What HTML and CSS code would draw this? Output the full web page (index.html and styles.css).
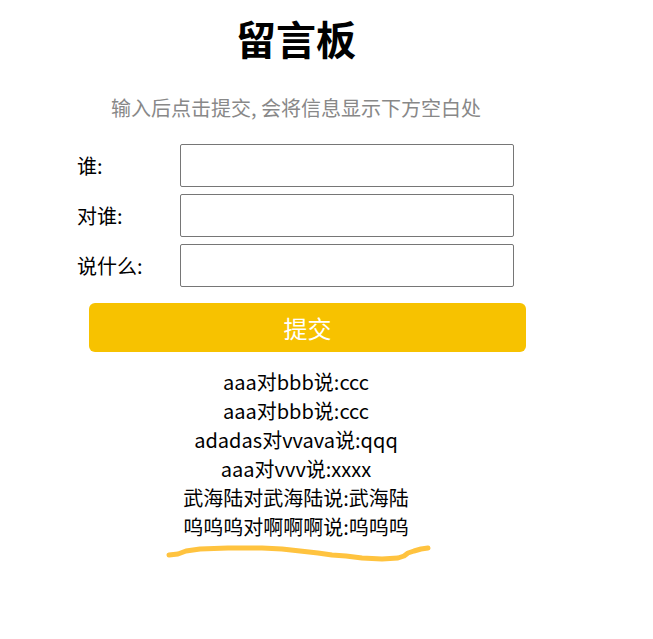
FILE: index.html
```html
<!DOCTYPE html>
<html lang="zh-CN">
<head>
    <meta charset="UTF-8">
    <meta name="viewport" content="width=device-width, initial-scale=1.0">
    <title>留言板</title>
    <link rel="stylesheet" href="styles.css">
</head>
<body>
    <div class="board">
        <h1>留言板</h1>
        <p class="hint">输入后点击提交, 会将信息显示下方空白处</p>

        <div class="form">
            <label for="from">谁:</label>
            <input type="text" id="from">
            <label for="to">对谁:</label>
            <input type="text" id="to">
            <label for="msg">说什么:</label>
            <input type="text" id="msg">
        </div>

        <button class="submit">提交</button>

        <div class="messages">
            <div>aaa对bbb说:ccc</div>
            <div>aaa对bbb说:ccc</div>
            <div>adadas对vvava说:qqq</div>
            <div>aaa对vvv说:xxxx</div>
            <div>武海陆对武海陆说:武海陆</div>
            <div>呜呜呜对啊啊啊说:呜呜呜</div>
        </div>

        <!-- hand-drawn underline -->
        <svg class="scribble" width="266" height="20" viewBox="166 542 266 20">
            <path d="M169 555 L178 554 L186 551 L200 549 L228 548 L262 548 L282 549 L300 551 L318 553 L332 555 L346 556 L362 558 L382 559 L398 558 L404 556 L408 553 L414 551 L421 549 L428 548"
                  fill="none" stroke="#ffc33f" stroke-width="5" stroke-linecap="round" stroke-linejoin="round"/>
        </svg>
    </div>
</body>
</html>
```

FILE: styles.css
```css
* {
    margin: 0;
    padding: 0;
    box-sizing: border-box;
}

body {
    font-family: "Noto Sans CJK SC", "Noto Sans", sans-serif;
    color: #000;
    background: #fff;
}

.board {
    width: 521px;
    padding-left: 71px;
}

h1 {
    text-align: center;
    font-size: 40px;
    font-weight: 700;
    line-height: 48px;
    margin-top: 14px;
}

.hint {
    text-align: center;
    color: #888;
    font-size: 20px;
    line-height: 29px;
    margin-top: 31px;
}

.form {
    display: grid;
    grid-template-columns: 103px 334px;
    row-gap: 7px;
    align-items: center;
    margin-top: 22px;
    margin-left: 6px;
}

.form label {
    font-size: 20px;
}

.form input {
    height: 43px;
    border: 1px solid #767676;
    border-radius: 2px;
    font-size: 18px;
    padding: 0 6px;
}

.submit {
    display: block;
    width: 437px;
    height: 49px;
    margin-top: 16px;
    margin-left: 18px;
    background: #f7c200;
    color: #fff;
    border: none;
    border-radius: 6px;
    font-family: inherit;
    font-size: 24px;
    cursor: pointer;
}

.messages {
    text-align: center;
    font-size: 20px;
    line-height: 29px;
    margin-top: 15px;
}

.scribble {
    display: block;
    margin-top: 1px;
    margin-left: 95px;
}
```
